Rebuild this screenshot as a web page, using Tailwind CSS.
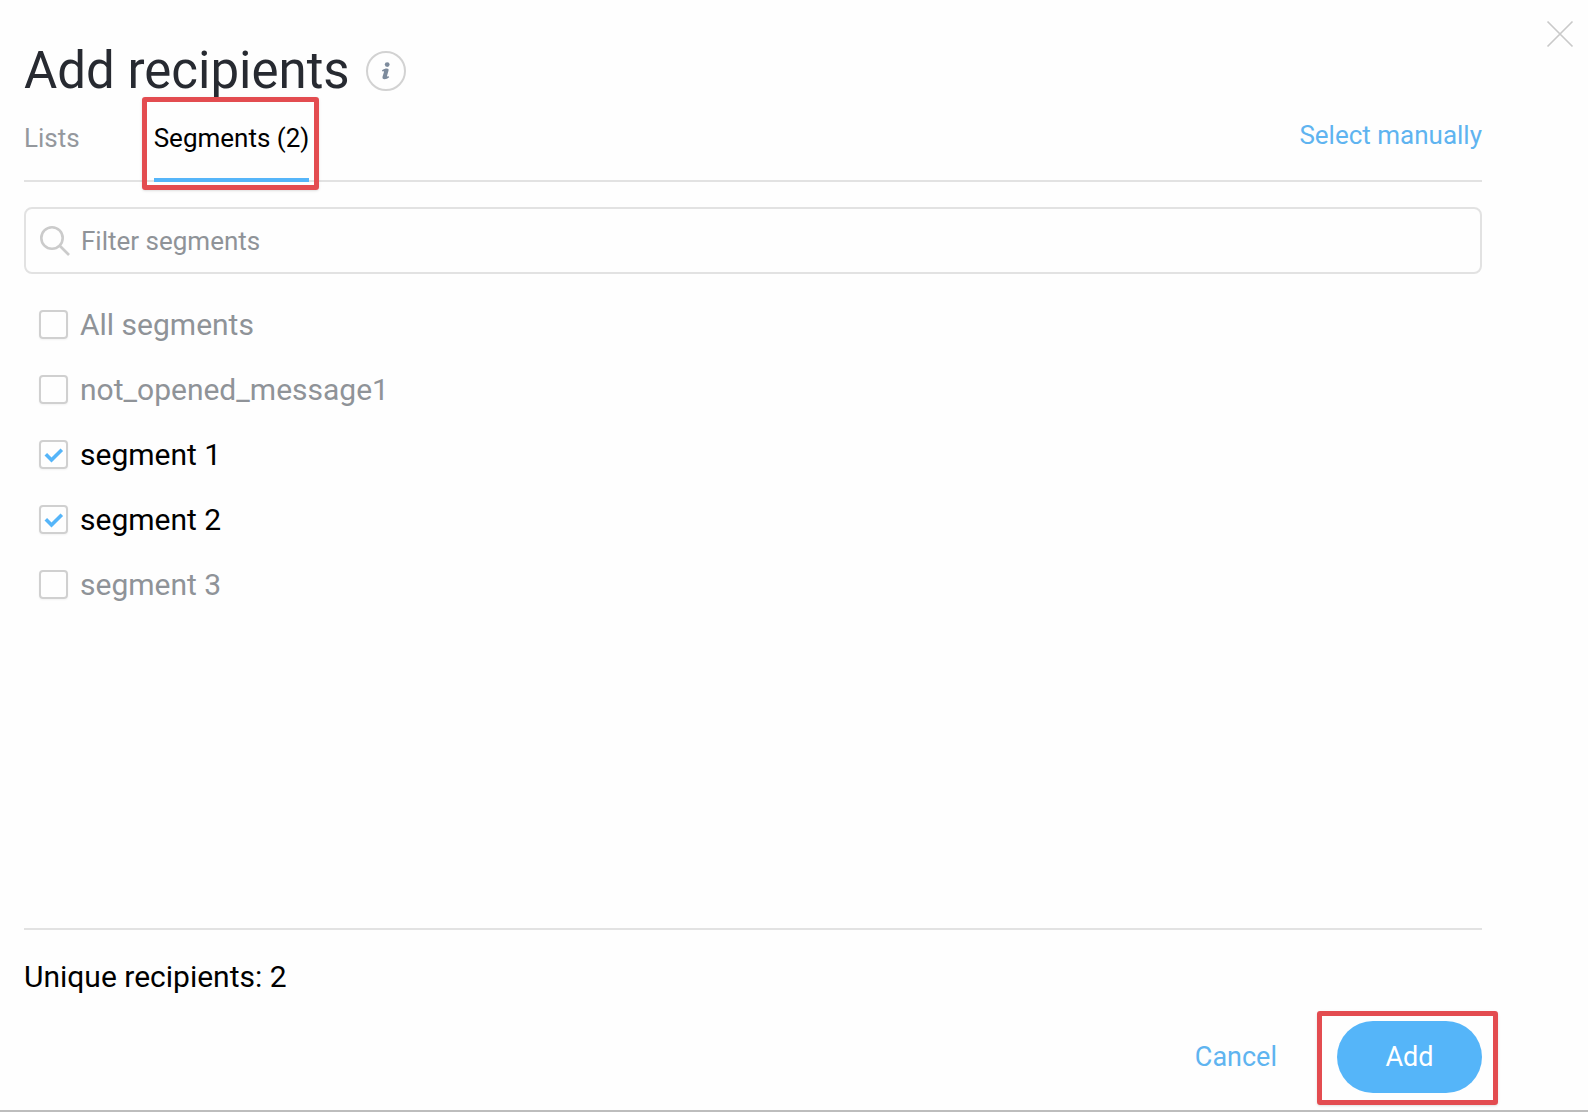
<!DOCTYPE html>
<html lang="en">
<head>
<meta charset="utf-8">
<meta name="viewport" content="width=device-width, initial-scale=1">
<title>Add recipients</title>
<script src="https://cdn.jsdelivr.net/npm/@tailwindcss/browser@4"></script>
</head>
<body class="bg-[#fefefe] font-['Roboto',sans-serif] text-black">
<main class="relative flex min-h-screen flex-col border-b-2 border-[#bdbdbd] pt-[43px] pr-[106px] pb-[17px] pl-6">
  <button type="button" aria-label="Close" class="absolute top-5 right-3.5 size-7">
    <svg viewBox="0 0 28 28" class="size-7" fill="none" stroke="#c9c9c9" stroke-width="1.7"><path d="M1.5 1.5l25 25M26.5 1.5l-25 25"/></svg>
  </button>

  <header class="flex items-center gap-4">
    <h1 class="text-[51px] leading-[56px] text-[#272a31]">Add recipients</h1>
    <button type="button" aria-label="Information" class="flex size-10 items-center justify-center rounded-full border-2 border-[#d2d2d2]">
      <svg viewBox="0 0 10 18" class="h-[18px] w-2.5" fill="#7d8b9c"><circle cx="6.2" cy="2.6" r="2.4"/><path d="M1 8.3C2.6 7 4.3 6.400 5.800 6.400c1.500 0 2.100.900 1.700 2.300L6.100 13.600c-.3 1 .2 1.300 1.800.6l.3 1c-1.500 1.300-3 2-4.700 2-1.700 0-2.400-.9-1.900-2.600l1.300-4.300c.3-1-.2-1.300-1.600-.8z"/></svg>
    </button>
  </header>

  <nav aria-label="Recipients source" class="flex items-start border-b-2 border-[#e2e2e2] text-[26px] leading-8">
    <a href="#lists" class="mt-[23px] text-[#94989d]">Lists</a>
    <a href="#segments" aria-current="page" class="relative -mb-0.5 ml-[74px] border-b-4 border-[#55b5f9] pt-[23px] pb-6">Segments (2)
      <span class="pointer-events-none absolute -top-0.5 -right-2.5 -bottom-3 -left-3 rounded-[3px] border-5 border-[#e34c50] shadow-sm"></span>
    </a>
    <a href="#manual" class="mt-5 ml-auto text-[#5fb4f0]">Select manually</a>
  </nav>

  <label class="mt-[25px] flex h-[67px] items-center gap-[11px] rounded-lg border-2 border-[#e2e2e2] pl-3.5">
    <svg viewBox="0 0 30 30" class="size-[30px] shrink-0" fill="none" stroke="#cbcbcb" stroke-width="2.6"><circle cx="12" cy="12" r="10.7"/><path d="M19.500 19.500l9.500 9.500"/></svg>
    <input type="text" aria-label="Filter segments" placeholder="Filter segments" class="min-w-0 flex-1 text-[26px] leading-8 outline-none placeholder:text-[#8f9398]">
  </label>

  <ul class="mt-[18px] mb-auto ml-[15px] text-[30px] leading-8 text-[#8f9398]">
    <li><label class="flex h-[65px] items-center gap-3">
      <input type="checkbox" class="size-[29px] appearance-none rounded-sm border-2 border-[#d0d0d0] shadow-xs">All segments</label></li>
    <li><label class="flex h-[65px] items-center gap-3">
      <input type="checkbox" class="size-[29px] appearance-none rounded-sm border-2 border-[#d0d0d0] shadow-xs">not_opened_message1</label></li>
    <li><label class="flex h-[65px] items-center gap-3 text-black">
      <span class="grid size-[29px]">
        <input type="checkbox" checked class="peer col-start-1 row-start-1 size-[29px] appearance-none rounded-sm border-2 border-[#d0d0d0] shadow-xs">
        <svg viewBox="0 0 29 29" class="pointer-events-none invisible col-start-1 row-start-1 size-[29px] peer-checked:visible" fill="none" stroke="#55b5f9" stroke-width="3.600"><path d="M6.800 14.300l5.700 5.700L22.800 9.700"/></svg>
      </span>segment 1</label></li>
    <li><label class="flex h-[65px] items-center gap-3 text-black">
      <span class="grid size-[29px]">
        <input type="checkbox" checked class="peer col-start-1 row-start-1 size-[29px] appearance-none rounded-sm border-2 border-[#d0d0d0] shadow-xs">
        <svg viewBox="0 0 29 29" class="pointer-events-none invisible col-start-1 row-start-1 size-[29px] peer-checked:visible" fill="none" stroke="#55b5f9" stroke-width="3.600"><path d="M6.800 14.300l5.700 5.700L22.800 9.700"/></svg>
      </span>segment 2</label></li>
    <li><label class="flex h-[65px] items-center gap-3">
      <input type="checkbox" class="size-[29px] appearance-none rounded-sm border-2 border-[#d0d0d0] shadow-xs">segment 3</label></li>
  </ul>

  <footer class="border-t-2 border-[#e2e2e2] pt-[31px]">
    <p class="text-[30px] leading-8">Unique recipients: 2</p>
    <div class="mt-7 flex items-center justify-end gap-[60px] text-[27px] leading-8">
      <button type="button" class="text-[#5fb4f0]">Cancel</button>
      <button type="submit" class="relative h-[72px] w-[145px] rounded-full bg-[#55b5f9] text-white">Add
        <span class="pointer-events-none absolute -top-2.5 -right-4 -bottom-3 -left-5 rounded-[3px] border-5 border-[#e34c50] shadow-sm"></span>
      </button>
    </div>
  </footer>
</main>
</body>
</html>
